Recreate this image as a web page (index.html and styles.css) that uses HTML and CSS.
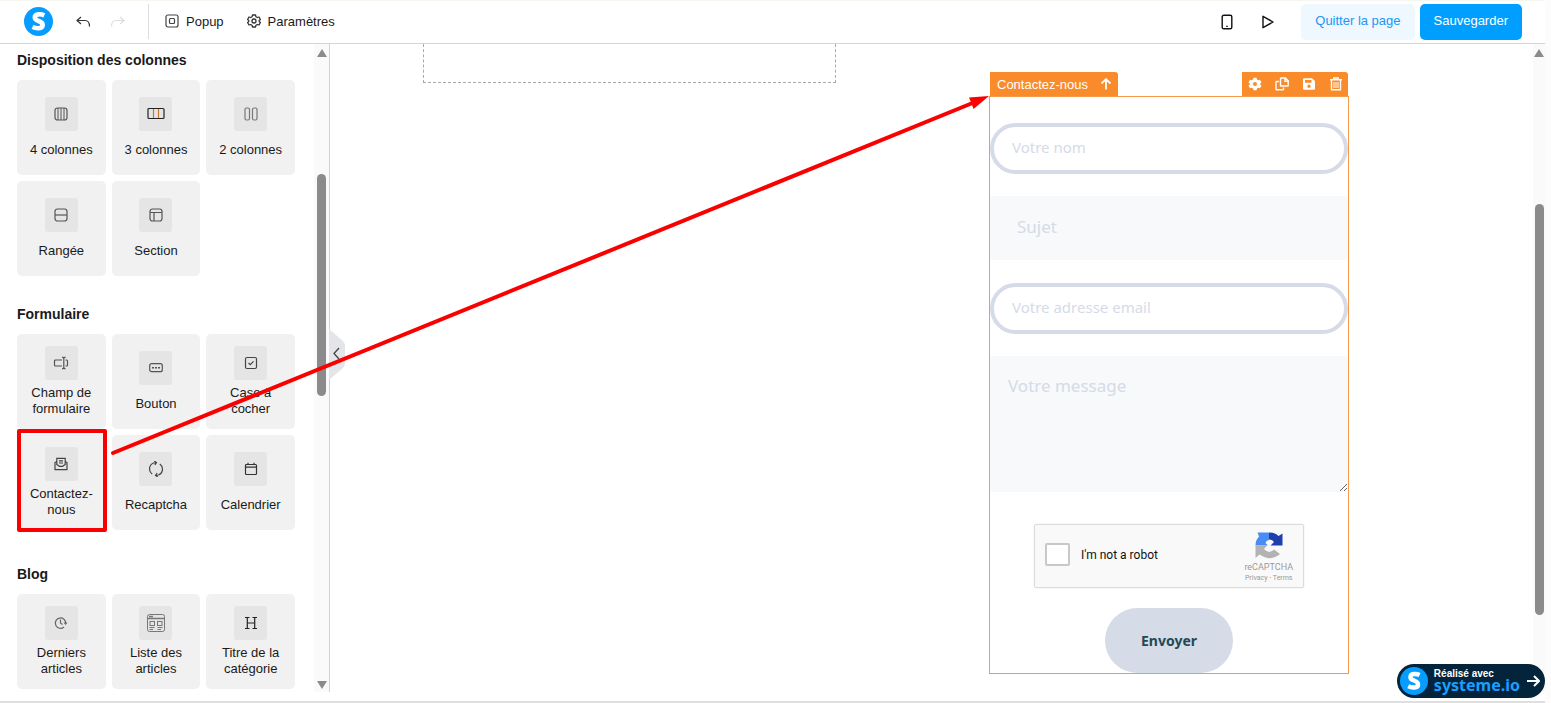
FILE: index.html
```html
<!DOCTYPE html>
<html lang="fr">
<head>
<meta charset="utf-8">
<title>Éditeur de page</title>
<link rel="stylesheet" href="styles.css">
</head>
<body>
<div class="app">
  <header class="topbar">
    <a class="logo" href="#" aria-label="Accueil"><svg width="29" height="29" viewBox="0 0 29 29"><circle cx="14.500" cy="14.500" r="14.500" fill="#069dff"/><path d="M20.300 8.300C17.500 7 10.800 6.300 10.800 10.500C10.800 14.800 18.700 13.200 18.700 18C18.700 22.200 12 21.600 8.500 20" fill="none" stroke="#fff" stroke-width="4.600"/></svg></a>
    <button class="icon-btn undo" aria-label="Annuler"><svg width="15" height="12" viewBox="0 0 15 12"><path d="M5 1L1 4.500L5 8M1 4.500H9Q13.500 4.500 13.500 10.500" fill="none" stroke="#333" stroke-width="1.200"/></svg></button>
    <button class="icon-btn redo" aria-label="Rétablir"><svg width="15" height="12" viewBox="0 0 15 12"><path d="M10 1L14 4.500L10 8M14 4.500H6Q1.500 4.500 1.500 10.500" fill="none" stroke="#ddd" stroke-width="1.200"/></svg></button>
    <span class="divider"></span>
    <button class="menu-btn"><svg width="14" height="14" viewBox="0 0 14 14" fill="none" stroke="#444" stroke-width="1.200"><rect x="1" y="1" width="12" height="12" rx="2"/><rect x="4.500" y="4.500" width="5" height="5" rx="1"/></svg>Popup</button>
    <button class="menu-btn"><svg width="14" height="14" viewBox="0 0 14 14" fill="none" stroke="#333" stroke-width="1.300" stroke-linejoin="round"><path d="M5.500 1H8.500L9 2.800L10.300 3.500L12 3L13.400 5.500L12.200 6.500V7.500L13.400 8.500L12 11L10.300 10.500L9 11.200L8.500 13H5.500L5 11.200L3.700 10.500L2 11L.6 8.500L1.800 7.500V6.500L.6 5.500L2 3L3.700 3.500L5 2.800Z"/><circle cx="7" cy="7" r="2"/></svg>Paramètres</button>
    <span class="spacer"></span>
    <button class="icon-btn phone" aria-label="Vue mobile"><svg width="12" height="16" viewBox="0 0 12 16"><rect x="1.200" y="1.200" width="9.600" height="13.600" rx="1.600" fill="none" stroke="#111" stroke-width="1.400"/><path d="M5.200 12.300H6.800" stroke="#111" stroke-width="1.200"/></svg></button>
    <button class="icon-btn play" aria-label="Aperçu"><svg width="14" height="14" viewBox="0 0 14 14"><path d="M2 1.300L12 7L2 12.700Z" fill="none" stroke="#111" stroke-width="1.400" stroke-linejoin="round"/></svg></button>
    <button class="btn btn-light">Quitter la page</button>
    <button class="btn btn-primary">Sauvegarder</button>
  </header>
  <div class="workspace">
    <aside class="sidebar">
      <div class="panel">
        <section class="group">
          <h2>Disposition des colonnes</h2>
          <div class="cards">
            <button class="card"><span class="tile"><svg width="14" height="14" viewBox="0 0 14 14" fill="none" stroke="#555"><rect x="1" y="1" width="12" height="12" rx="2.500" stroke-width="1.200"/><path d="M4 1V13M7 1V13M10 1V13"/></svg></span><span>4 colonnes</span></button>
            <button class="card"><span class="tile"><svg width="18" height="14" viewBox="0 0 18 14" fill="none"><rect x="1" y="1.500" width="16" height="10" rx="1" stroke="#222" stroke-width="1.200"/><path d="M6.500 2V11M11.500 2V11" stroke="#c87a28" stroke-width="1.200"/></svg></span><span>3 colonnes</span></button>
            <button class="card"><span class="tile"><svg width="14" height="14" viewBox="0 0 14 14" fill="none" stroke="#777" stroke-width="1.200"><rect x="1" y="1" width="4.500" height="12" rx="1.500"/><rect x="8.500" y="1" width="4.500" height="12" rx="1.500"/></svg></span><span>2 colonnes</span></button>
            <button class="card"><span class="tile"><svg width="14" height="14" viewBox="0 0 14 14" fill="none" stroke="#555" stroke-width="1.200"><rect x="1" y="1" width="12" height="12" rx="2.500"/><path d="M1 7H13"/></svg></span><span>Rangée</span></button>
            <button class="card"><span class="tile"><svg width="14" height="14" viewBox="0 0 14 14" fill="none" stroke="#555" stroke-width="1.200"><rect x="1" y="1" width="12" height="12" rx="2.500"/><path d="M1 4.500H13M5 4.500V13"/></svg></span><span>Section</span></button>
          </div>
        </section>
        <section class="group group-form">
          <h2>Formulaire</h2>
          <div class="cards">
            <button class="card"><span class="tile"><svg width="16" height="14" viewBox="0 0 16 14" fill="none" stroke="#555" stroke-width="1.200"><path d="M9 4H2.500Q1.500 4 1.500 5V9Q1.500 10 2.500 10H9M12.500 4H13.500Q14.500 4 14.500 5V9Q14.500 10 13.500 10H12.500M9 1.200Q10.800 1.200 10.800 2.500V11.500Q10.800 12.800 9 12.800M12.600 1.200Q10.800 1.200 10.800 2.500M10.800 11.500Q10.800 12.800 12.600 12.800"/></svg></span><span>Champ de<br>formulaire</span></button>
            <button class="card"><span class="tile"><svg width="14" height="14" viewBox="0 0 14 14" fill="none" stroke="#555" stroke-width="1.200"><rect x=".7" y="2.700" width="12.600" height="8" rx="2"/><path d="M3 6.700H5M6 6.700H8M9 6.700H11" stroke-width="1.500"/></svg></span><span>Bouton</span></button>
            <button class="card"><span class="tile"><svg width="14" height="14" viewBox="0 0 14 14" fill="none" stroke="#444" stroke-width="1.200"><rect x="1.500" y="1.500" width="11" height="11" rx="1.500"/><path d="M4.500 7L6.300 8.700L9.500 5.400"/></svg></span><span>Case à<br>cocher</span></button>
            <button class="card selected"><span class="tile"><svg width="14" height="14" viewBox="0 0 14 14" fill="none" stroke="#444" stroke-width="1.200"><path d="M2.800 8V1.300H11.200V8M5 3.800H9M5 6H9M2.800 4.500L1 5.500V12.700H13V5.500L11.200 4.500M2.800 7.500L5.500 9.300H8.500L11.200 7.500"/></svg></span><span>Contactez-<br>nous</span></button>
            <button class="card"><span class="tile"><svg width="16" height="16" viewBox="0 0 16 16" fill="none" stroke="#444" stroke-width="1.200"><path d="M4.200 13A6.300 6.300 0 0 1 5.500 2L8.500 1.700M6.300 0L8.500 1.700L6.800 4M11.800 3A6.300 6.300 0 0 1 10.500 14L7.500 14.300M9.700 16L7.500 14.300L9.200 12"/></svg></span><span>Recaptcha</span></button>
            <button class="card"><span class="tile"><svg width="14" height="14" viewBox="0 0 14 14" fill="none" stroke="#333" stroke-width="1.200"><rect x="1.500" y="2.500" width="11" height="10" rx="1"/><path d="M1.500 5.200H12.500M4 .8V3M10 .8V3"/></svg></span><span>Calendrier</span></button>
          </div>
        </section>
        <section class="group">
          <h2>Blog</h2>
          <div class="cards">
            <button class="card"><span class="tile"><svg width="14" height="14" viewBox="0 0 14 14" fill="none" stroke="#666" stroke-width="1.200"><path d="M10 11A5.200 5.200 0 1 1 11.700 7.500M6.500 3.500V7L8.500 8.500"/><path d="M9.500 6.500H13.500L11.600 9Z" fill="#666" stroke="none"/></svg></span><span>Derniers<br>articles</span></button>
            <button class="card"><span class="tile"><svg width="20" height="20" viewBox="0 0 20 20" fill="none" stroke="#777"><rect x="1.500" y="1.500" width="17" height="17" rx="2"/><path d="M1.500 5.500H18.500M3 3.500H7" stroke-width="1.400"/><rect x="4" y="8.500" width="4.500" height="4"/><rect x="11.500" y="8.500" width="4.500" height="4"/><path d="M3.500 14.500H8.500M11.500 14.500H16.500M3.500 16.500H7M11.500 16.500H15"/></svg></span><span>Liste des<br>articles</span></button>
            <button class="card"><span class="tile"><svg width="14" height="14" viewBox="0 0 14 14" fill="none" stroke="#222"><path d="M1 1.500H5.500M8.500 1.500H13M1 12.500H5.500M8.500 12.500H13M3.300 7H10.700"/><path d="M3.300 1.500V12.500M10.700 1.500V12.500" stroke-width="1.200"/></svg></span><span>Titre de la<br>catégorie</span></button>
          </div>
        </section>
      </div>
      <div class="scrollbar side-bar"><span class="arrow up"></span><span class="thumb"></span><span class="arrow down"></span></div>
      <button class="collapse" aria-label="Replier"><svg width="17" height="52" viewBox="0 0 17 52"><path d="M0 0L14 12Q16 14 16 18V33Q16 37 14 39L0 51Z" fill="#e3e5e8"/><path d="M10 19L5 24.500L10 30" fill="none" stroke="#444" stroke-width="1.300"/></svg></button>
    </aside>
    <main class="canvas">
      <div class="columns">
        <div class="dropzone"></div>
        <div class="block">
          <div class="block-tools">
            <button class="tag">Contactez-nous<svg width="12" height="12" viewBox="0 0 12 12"><path d="M6 11.500V1.500M1.500 5.500L6 1.200L10.500 5.500" fill="none" stroke="#fff" stroke-width="1.800"/></svg></button>
            <div class="tools">
              <button aria-label="Réglages"><svg width="14" height="14" viewBox="0 0 14 14"><path fill="#fff" fill-rule="evenodd" d="M5.500 .8H8.500L9 2.600L10.300 3.300L12 2.800L13.500 5.400L12.200 6.500V7.500L13.500 8.600L12 11.200L10.300 10.700L9 11.400L8.500 13.200H5.500L5 11.400L3.700 10.700L2 11.200L.5 8.600L1.800 7.500V6.500L.5 5.400L2 2.800L3.700 3.300L5 2.600ZM7 5A2 2 0 1 0 7 9A2 2 0 1 0 7 5Z"/></svg></button>
              <button aria-label="Dupliquer"><svg width="14" height="14" viewBox="0 0 14 14" fill="none" stroke="#fff" stroke-width="1.400"><path d="M5.500 1.500Q5.500 1 6 1H10.500L13.200 3.700V8.500Q13.200 9 12.700 9H6Q5.500 9 5.500 8.500ZM10 1V4.200H13M4 4.500H1.500Q1 4.500 1 5V12.300Q1 12.800 1.500 12.800H8Q8.500 12.800 8.500 12.300V10.500"/></svg></button>
              <button aria-label="Enregistrer"><svg width="14" height="14" viewBox="0 0 14 14"><path fill="#fff" fill-rule="evenodd" d="M2.500 1.200H10L13 4V11.500Q13 12.800 11.700 12.800H2.300Q1 12.800 1 11.500V2.500Q1 1.200 2.500 1.200ZM3 3V5.800H9.500V3ZM7 7.600A1.700 1.700 0 1 0 7 11A1.700 1.700 0 1 0 7 7.600Z"/></svg></button>
              <button aria-label="Supprimer"><svg width="14" height="14" viewBox="0 0 14 14" fill="none" stroke="#fff" stroke-width="1.400"><path d="M1 2.800H13M4.800 2.500V1H9.200V2.500M2.500 3V12.700H11.500V3"/><path d="M5 5V11M7 5V11M9 5V11" stroke-width="1"/></svg></button>
            </div>
          </div>
          <form class="contact">
            <input class="field pill" type="text" placeholder="Votre nom" aria-label="Votre nom">
            <input class="field soft" type="text" placeholder="Sujet" aria-label="Sujet">
            <input class="field pill" type="email" placeholder="Votre adresse email" aria-label="Votre adresse email">
            <textarea class="field message" placeholder="Votre message" aria-label="Votre message"></textarea>
            <div class="captcha">
              <input type="checkbox" id="robot"><label for="robot">I'm not a robot</label>
              <div class="captcha-brand">
                <svg width="28" height="27" viewBox="0 0 28 27"><path d="M14 .5V8Q11 8.500 10.500 11L13 13.500H.5Q.5 8 4 4.500L2.500 .5Z" fill="#4a8cf5"/><path d="M14 .5Q20 .5 23.500 4L27.500 1.500V13.500H15.500L19 10Q17 7.500 14 7.500Z" fill="#1f3fae"/><path d="M.5 13.500H12L9 17Q14 22.500 19 17.500L25 22Q16 30 4.500 22.500L.5 26Z" fill="#b3b3b3"/></svg>
                <span class="brand-name">reCAPTCHA</span>
                <span class="brand-links"><a href="#">Privacy</a> - <a href="#">Terms</a></span>
              </div>
            </div>
            <button class="submit" type="button">Envoyer</button>
          </form>
        </div>
      </div>
      <div class="scrollbar main-bar"><span class="arrow up"></span><span class="thumb"></span></div>
    </main>
  </div>
  <a class="badge" href="#">
    <svg width="28" height="28" viewBox="0 0 29 29"><circle cx="14.500" cy="14.500" r="14.500" fill="#069dff"/><path d="M20.300 8.300C17.500 7 10.800 6.300 10.800 10.500C10.800 14.800 18.700 13.200 18.700 18C18.700 22.200 12 21.600 8.500 20" fill="none" stroke="#fff" stroke-width="4.600"/></svg>
    <span class="badge-text"><span class="made">Réalisé avec</span><span class="site">systeme.io</span></span>
    <svg width="14" height="14" viewBox="0 0 14 14"><path d="M1 7H12.500M8 2L13 7L8 12" fill="none" stroke="#fff" stroke-width="2"/></svg>
  </a>
  <svg class="pointer" width="1000" height="480" viewBox="0 0 1000 480"><path d="M113 453L975 102" stroke="#fb0000" stroke-width="4" stroke-linecap="round"/><path d="M989 96L969 97.500L970.500 101L973.500 109Z" fill="#fb0000"/></svg>
</div>
</body>
</html>
```
FILE: styles.css
```css
* { box-sizing: border-box; }
body { margin: 0; background: #fcfcfc; font-family: "Liberation Sans", Arial, sans-serif; font-size: 13px; color: #1a1a1a; }
button { font: inherit; color: inherit; border: 0; padding: 0; background: none; cursor: pointer; }
svg { display: block; flex: none; }
.app { position: relative; display: flex; flex-direction: column; min-height: 100vh; margin-right: 6px; background: #fff; border-top: 1px solid #f6f6f0; border-bottom: 2px solid #dfdfdf; overflow: hidden; }

.topbar { display: flex; align-items: center; height: 43px; padding: 0 23px 1px 24px; border-bottom: 1px solid #d5d5d5; }
.undo { margin-left: 23px; }
.redo { margin-left: 19px; }
.divider { width: 1px; height: 35px; margin: 0 16px 0 23px; background: #ddd; }
.menu-btn { display: flex; align-items: center; gap: 7px; margin-right: 23px; padding-bottom: 1px; }
.spacer { flex: 1; }
.phone { margin-right: 28px; }
.play { margin-right: 26px; }
.btn { height: 36px; padding: 0 14px 2px; border-radius: 5px; }
.btn-light { background: #eff7ff; color: #1a97f5; margin-right: 5px; }
.btn-primary { background: #009fff; color: #fff; }

.workspace { display: flex; flex: 1; padding-bottom: 9px; }
.sidebar { position: relative; display: flex; width: 330px; flex: none; border-right: 1px solid #d2d2d2; }
.panel { flex: 1; padding: 8px 19px 3px 17px; }
.group { margin-bottom: 30px; }
.group-form { margin-bottom: 36px; }
.group:last-child { margin-bottom: 0; }
h2 { margin: 0 0 12px; font-size: 14px; line-height: 16px; }
.cards { display: grid; grid-template-columns: repeat(3, 1fr); gap: 6px; }
.card { position: relative; display: flex; flex-direction: column; align-items: center; justify-content: space-evenly; height: 95px; padding: 6px 4px; border-radius: 5px; background: #f1f1f1; line-height: 16px; }
.tile { display: flex; align-items: center; justify-content: center; width: 33px; height: 34px; border-radius: 3px; background: #e5e5e5; }
.selected::after { content: ""; position: absolute; inset: -6px -1px -2px 0; border: 4px solid #fb0000; border-radius: 2px; }

.scrollbar { display: flex; flex-direction: column; align-items: center; padding: 5px 0 3px; background: #fafafa; }
.side-bar { width: 15px; }
.main-bar { width: 12px; }
.arrow { border: 5px solid transparent; }
.up { border-top: 0; border-bottom: 8px solid #8b8b8b; }
.down { border-bottom: 0; border-top: 8px solid #8b8b8b; margin-top: auto; }
.thumb { width: 9px; border-radius: 5px; background: #8b8b8b; }
.side-bar .thumb { height: 222px; margin-top: 117px; }
.main-bar .thumb { height: 411px; margin-top: 147px; }
.collapse { position: absolute; left: 100%; top: 285px; }

.canvas { display: flex; flex: 1; }
.columns { flex: 1; display: grid; grid-template-columns: 413fr 360fr; column-gap: 153px; align-items: start; padding: 0 184px 0 93px; }
.dropzone { height: 39px; border: 1px dashed #aaa; border-top: 0; }
.block { padding-top: 28px; }
.block-tools { display: flex; justify-content: space-between; padding: 0 1px; }
.tag, .tools { display: flex; align-items: center; height: 24px; background: #f98b2b; color: #fff; border-radius: 0 3px 0 0; }
.tag { gap: 12px; padding: 0 6px 0 7px; }
.tools { gap: 13px; padding: 0 5px 0 6px; }
.contact { display: flex; flex-direction: column; gap: 23px; padding-top: 26px; border: 1px solid #f79a48; }
.field { display: block; width: 100%; font-family: "Noto Sans", "Open Sans", sans-serif; border: 0; outline: 0; }
.field::placeholder { color: #d5dbe7; opacity: 1; }
.pill { height: 51px; margin-bottom: -1px; padding: 0 18px 3px; border: 4px solid #d5dbe7; border-radius: 26px; background: #fff; font-size: 15px; }
.soft { height: 64px; padding: 0 27px 4px; border-radius: 4px; background: #f7f9fb; font-size: 17px; }
.message { height: 136px; padding: 18px; border-radius: 4px; background: #f7f9fb; font-size: 17px; line-height: 24px; resize: vertical; }
.captcha { display: flex; align-items: center; align-self: center; width: 270px; height: 64px; margin-top: 9px; padding: 0 10px; border: 1px solid #dcdcdc; border-radius: 2px; background: #f9f9f9; box-shadow: 0 0 2px rgba(0, 0, 0, .1); font: 12px Roboto, sans-serif; color: #111; }
.captcha input { appearance: none; width: 25px; height: 23px; margin: 0 11px 4px 0; border: 2px solid #c8c8c8; border-radius: 2px; background: #fff; }
.captcha label { flex: 1; padding-bottom: 2px; }
.captcha-brand { display: flex; flex-direction: column; align-items: center; padding-top: 4px; color: #999; }
.brand-name { margin-top: 3px; font-size: 9px; line-height: 11px; }
.brand-links { font-size: 7px; line-height: 11px; }
.brand-links a { color: inherit; text-decoration: none; }
.submit { align-self: center; width: 128px; height: 65px; margin-top: -3px; border-radius: 33px; background: #d5dbe7; color: #1f4a55; font: bold 14px "Noto Sans", sans-serif; }

.badge { position: absolute; right: 0; bottom: 3px; display: flex; align-items: center; gap: 6px; height: 34px; padding: 0 5px 0 3px; border-radius: 17px; background: #03243b; color: #fff; text-decoration: none; }
.badge-text { display: flex; flex-direction: column; }
.made { font-size: 10px; font-weight: bold; line-height: 8px; }
.site { font: bold 16px/14px "Noto Sans", sans-serif; color: #1a9fff; }
.pointer { position: absolute; left: 0; top: -1px; pointer-events: none; }
```
